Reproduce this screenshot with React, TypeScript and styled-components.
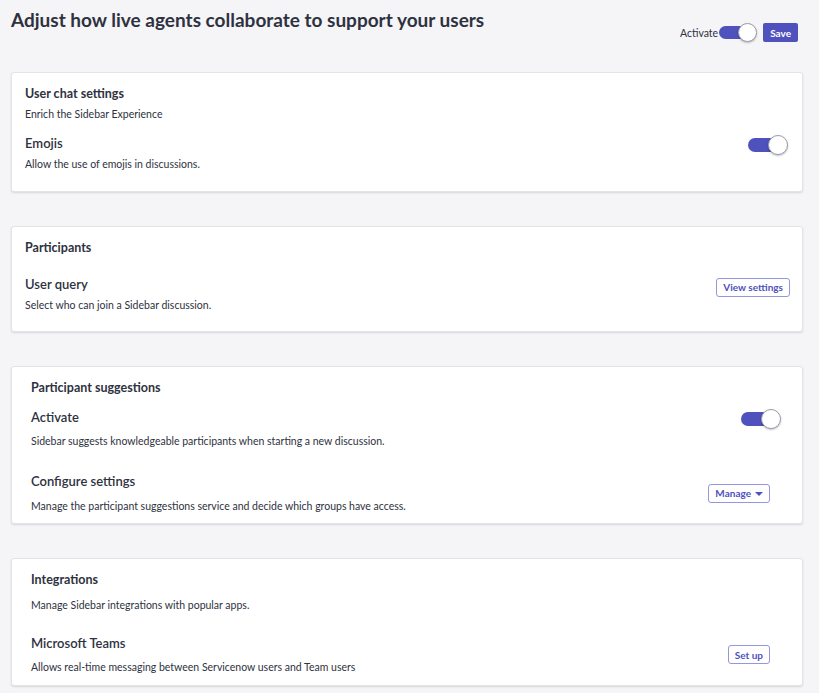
import React, { useState } from 'react';
import styled, { createGlobalStyle } from 'styled-components';

const GlobalStyle = createGlobalStyle`
  html, body {
    margin: 0;
    padding: 0;
    background: #f5f5f7;
  }
  body {
    font-family: Lato, "Open Sans", "Liberation Sans", sans-serif;
    color: #2e3240;
  }
`;

const Page = styled.div`
  padding: 8px 16px 20px 11px;
  display: flex;
  flex-direction: column;
`;

const Header = styled.div`
  display: flex;
  justify-content: space-between;
  align-items: flex-start;
  height: 64px;
`;

const Title = styled.h1`
  margin: 0;
  font-size: 19px;
  line-height: 24px;
  font-weight: 700;
  color: #2e3240;
`;

const HeaderActions = styled.div`
  display: flex;
  align-items: center;
  margin-top: 15px;
  margin-right: 5px;
`;

const ActivateLabel = styled.span`
  font-size: 10.5px;
  color: #2e3240;
  margin-right: 1px;
`;

const SaveButton = styled.button`
  margin-left: 6px;
  height: 19px;
  padding: 0 7px;
  border: none;
  border-radius: 2px;
  background: #4f51bd;
  color: #fff;
  font-family: inherit;
  font-size: 10px;
  font-weight: 700;
  cursor: pointer;
`;

const Cards = styled.div`
  display: flex;
  flex-direction: column;
  gap: 34px;
`;

const Card = styled.section<{ $pad: number; $padRight: number; $padBottom: number; $height: number }>`
  background: #fff;
  border: 1px solid #e3e3e8;
  border-radius: 3px;
  box-shadow: 0 1px 2px rgba(0, 0, 0, 0.12);
  padding: 13px ${(p) => p.$padRight}px ${(p) => p.$padBottom}px ${(p) => p.$pad}px;
  box-sizing: border-box;
  height: ${(p) => p.$height}px;
  display: flex;
  flex-direction: column;
`;

const CardTitle = styled.h2`
  margin: 0;
  font-size: 12.5px;
  line-height: 16px;
  font-weight: 700;
  color: #2e3240;
`;

const Row = styled.div<{ $gap: number }>`
  display: flex;
  justify-content: space-between;
  align-items: center;
  margin-top: ${(p) => p.$gap}px;
`;

const RowText = styled.div`
  display: flex;
  flex-direction: column;
`;

const ItemTitle = styled.h3`
  margin: 0;
  font-size: 13px;
  line-height: 16px;
  font-weight: 600;
  color: #2e3240;
`;

const Description = styled.p<{ $gap: number }>`
  margin: ${(p) => p.$gap}px 0 0;
  font-size: 10.5px;
  line-height: 14px;
  color: #2e3240;
`;

const Control = styled.div<{ $shift: number }>`
  display: flex;
  align-items: center;
  transform: translateY(${(p) => p.$shift}px);
`;

const ToggleWrap = styled.button<{ $size: number }>`
  position: relative;
  width: ${(p) => p.$size * 2}px;
  height: ${(p) => p.$size}px;
  padding: 0;
  border: none;
  background: transparent;
  cursor: pointer;
  flex-shrink: 0;
`;

const Track = styled.span<{ $size: number; $on: boolean }>`
  position: absolute;
  left: 0;
  top: ${(p) => Math.round(p.$size * 0.15)}px;
  width: ${(p) => p.$size * 1.7}px;
  height: ${(p) => p.$size * 0.7}px;
  border-radius: ${(p) => p.$size}px;
  background: ${(p) => (p.$on ? '#4f51bd' : '#c9cad3')};
`;

const Knob = styled.span<{ $size: number; $on: boolean }>`
  position: absolute;
  top: 0;
  left: ${(p) => (p.$on ? p.$size : 0)}px;
  width: ${(p) => p.$size}px;
  height: ${(p) => p.$size}px;
  box-sizing: border-box;
  border-radius: 50%;
  background: #fff;
  border: 1px solid #9a9cab;
  box-shadow: 0 1px 2px rgba(0, 0, 0, 0.25);
`;

const OutlineButton = styled.button<{ $mr?: number }>`
  height: 19px;
  padding: 0 6px;
  margin-right: ${(p) => p.$mr ?? 0}px;
  display: flex;
  align-items: center;
  gap: 4px;
  border: 1.5px solid #9496e0;
  border-radius: 3px;
  background: #fff;
  color: #4f51bd;
  font-family: inherit;
  font-size: 10px;
  font-weight: 700;
  cursor: pointer;
  white-space: nowrap;
`;

const Caret = styled.span`
  width: 0;
  height: 0;
  border-left: 4px solid transparent;
  border-right: 4px solid transparent;
  border-top: 4px solid #4f51bd;
  margin-top: 1px;
`;

const Toggle = ({ size, initial = true }: { size: number; initial?: boolean }) => {
  const [on, setOn] = useState(initial);
  return (
    <ToggleWrap $size={size} onClick={() => setOn(!on)} aria-pressed={on}>
      <Track $size={size} $on={on} />
      <Knob $size={size} $on={on} />
    </ToggleWrap>
  );
};

export default function App() {
  return (
    <>
      <GlobalStyle />
      <Page>
        <Header>
          <Title>Adjust how live agents collaborate to support your users</Title>
          <HeaderActions>
            <ActivateLabel>Activate</ActivateLabel>
            <Toggle size={19} />
            <SaveButton>Save</SaveButton>
          </HeaderActions>
        </Header>

        <Cards>
          {/* User chat */}
          <Card $pad={13} $padRight={14} $padBottom={20} $height={120}>
            <CardTitle>User chat settings</CardTitle>
            <Description $gap={5}>Enrich the Sidebar Experience</Description>
            <Row $gap={14}>
              <RowText>
                <ItemTitle>Emojis</ItemTitle>
                <Description $gap={6}>Allow the use of emojis in discussions.</Description>
              </RowText>
              <Control $shift={-8}>
                <Toggle size={20} />
              </Control>
            </Row>
          </Card>

          {/* Participants */}
          <Card $pad={13} $padRight={12} $padBottom={20} $height={106}>
            <CardTitle>Participants</CardTitle>
            <Row $gap={20}>
              <RowText>
                <ItemTitle>User query</ItemTitle>
                <Description $gap={6}>Select who can join a Sidebar discussion.</Description>
              </RowText>
              <Control $shift={-7}>
                <OutlineButton>View settings</OutlineButton>
              </Control>
            </Row>
          </Card>

          {/* Participant suggestions */}
          <Card $pad={19} $padRight={21} $padBottom={11} $height={158}>
            <CardTitle>Participant suggestions</CardTitle>
            <Row $gap={13}>
              <RowText>
                <ItemTitle>Activate</ItemTitle>
                <Description $gap={9}>
                  Sidebar suggests knowledgeable participants when starting a new discussion.
                </Description>
              </RowText>
              <Control $shift={-10}>
                <Toggle size={20} />
              </Control>
            </Row>
            <Row $gap={25}>
              <RowText>
                <ItemTitle>Configure settings</ItemTitle>
                <Description $gap={10}>
                  Manage the participant suggestions service and decide which groups have access.
                </Description>
              </RowText>
              <Control $shift={0}>
                <OutlineButton $mr={11}>
                  Manage <Caret />
                </OutlineButton>
              </Control>
            </Row>
          </Card>

          {/* Integrations */}
          <Card $pad={19} $padRight={32} $padBottom={12} $height={128}>
            <CardTitle>Integrations</CardTitle>
            <Description $gap={10}>Manage Sidebar integrations with popular apps.</Description>
            <Row $gap={23}>
              <RowText>
                <ItemTitle>Microsoft Teams</ItemTitle>
                <Description $gap={9}>
                  Allows real-time messaging between Servicenow users and Team users
                </Description>
              </RowText>
              <Control $shift={0}>
                <OutlineButton>Set up</OutlineButton>
              </Control>
            </Row>
          </Card>
        </Cards>
      </Page>
    </>
  );
}
